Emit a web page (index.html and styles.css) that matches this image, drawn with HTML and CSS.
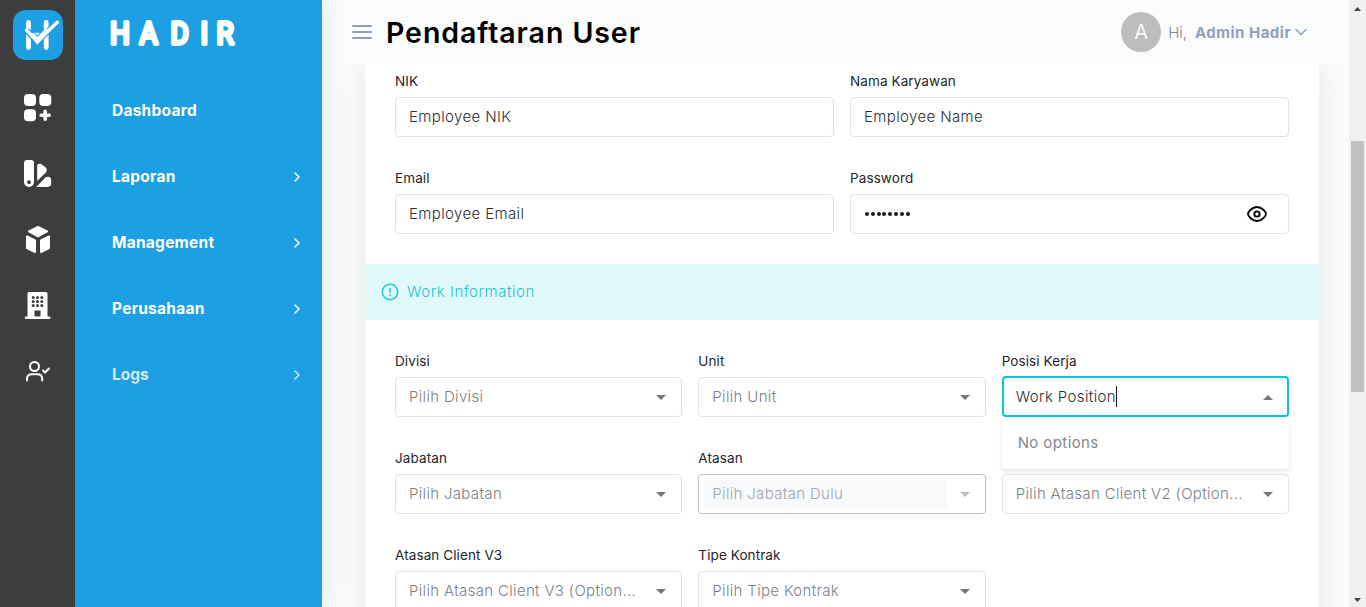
FILE: index.html
```html
<!DOCTYPE html>
<html lang="id">
<head>
<meta charset="utf-8">
<title>Pendaftaran User</title>
<link rel="stylesheet" href="styles.css">
</head>
<body>
<div class="app">
  <nav class="rail">
    <svg class="logo" viewBox="0 0 50 50" width="50" height="50">
      <rect width="50" height="50" rx="13" fill="#1ca0e3"/>
      <path d="M15.5 12.4v25.2M33.2 12.4v25.2" stroke="#fff" stroke-width="4.8" stroke-linecap="round"/>
      <path d="M13.5 20.3L24.3 31.3L44.3 12.3" fill="none" stroke="#1ca0e3" stroke-width="6"/>
      <path d="M13.5 20.3L24.3 31.3L44.3 12.3" fill="none" stroke="#fff" stroke-width="3.4" stroke-linecap="round"/>
      <path d="M16 24L24.3 34.8L41 17" fill="#fff"/>
      <path d="M18 19.5L24.3 27L31.5 19.5Z" fill="#1ca0e3"/>
      <path d="M21.8 22.7h5l-2.5 2.7z" fill="#fff"/>
    </svg>
    <svg class="rail-icon" viewBox=".5 .5 28 28" width="28" height="28" fill="#fff">
      <rect x=".5" y=".5" width="12" height="12" rx="4"/><rect x="15.8" y=".5" width="12" height="12" rx="4"/><rect x=".5" y="15.8" width="12" height="12" rx="4"/>
      <path d="M21.7 17.7v8M17.700 21.700h8" stroke="#fff" stroke-width="3.6" stroke-linecap="round"/>
    </svg>
    <svg class="rail-icon" viewBox=".5 .5 28 28" width="28" height="28" fill="#fff">
      <path fill-rule="evenodd" d="M3.5.5h4q3 0 3 3v19a5 5 0 0 1-10 0v-19q0-3 3-3zM5.5 20.8a1.9 1.9 0 1 0 0 3.8 1.9 1.9 0 0 0 0-3.8z"/>
      <path d="M13.7 21.5V5.5q2.2-2 4.6-.6l3.4 2.7q2.7 2.4.8 5.2z"/>
      <path d="M12.8 27.5l9.3-9.8q5.4-1.8 5.6 3.2v3.2q-.2 3.2-3.6 3.4z"/>
    </svg>
    <svg class="rail-icon" viewBox=".5 .5 28 28" width="28" height="28" fill="#fff" stroke="#fff" stroke-linejoin="round" stroke-width="2">
      <path d="M14.5 1.5l9 4.5-9 5-9-5z"/><path d="M3.5 11l8 4v11.5l-8-4z"/><path d="M25.5 11l-8 4v11.5l8-4z"/>
    </svg>
    <svg class="rail-icon" viewBox=".5 .5 28 28" width="28" height="28" fill="#fff">
      <path fill-rule="evenodd" d="M5.5.5h17q1.5 0 1.5 1.5v23h1.7q1.3 0 1.3 1.3t-1.3 1.2H2.500q-1.3 0-1.3-1.2T2.500 25H4V2q0-1.500 1.500-1.500zM11 19v6h6v-6z"/>
      <g fill="#3d3d3d"><circle cx="9.700" cy="6" r="1.500"/><circle cx="14" cy="6" r="1.500"/><circle cx="18.300" cy="6" r="1.500"/><circle cx="9.700" cy="10" r="1.500"/><circle cx="14" cy="10" r="1.500"/><circle cx="18.300" cy="10" r="1.500"/><circle cx="9.700" cy="14" r="1.500"/><circle cx="14" cy="14" r="1.500"/><circle cx="18.300" cy="14" r="1.500"/></g>
    </svg>
    <svg class="rail-icon" viewBox=".5 .5 28 28" width="28" height="28" fill="none" stroke="#fff" stroke-width="2" stroke-linecap="round" stroke-linejoin="round">
      <circle cx="11" cy="9" r="4.500"/><path d="M3.500 23v-1.500q0-4.700 4.700-4.700h5.800q4.700 0 4.700 4.700v1.500"/><path d="M19.500 13l2 2 4-4"/>
    </svg>
  </nav>
  <aside class="sidebar">
    <svg class="brand" width="150" height="32" viewBox="0 0 150 32">
      <text y="27" x="0 32.7 67.2 100.6 118.3" transform="scale(.9 1)">HADIR</text>
    </svg>
    <div class="menu">
      <a class="menu-item">Dashboard</a>
      <a class="menu-item">Laporan<svg class="chev" viewBox="0 0 8 10"><path d="M2 1l4 4-4 4"/></svg></a>
      <a class="menu-item">Management<svg class="chev" viewBox="0 0 8 10"><path d="M2 1l4 4-4 4"/></svg></a>
      <a class="menu-item">Perusahaan<svg class="chev" viewBox="0 0 8 10"><path d="M2 1l4 4-4 4"/></svg></a>
      <a class="menu-item dim">Logs<svg class="chev" viewBox="0 0 8 10"><path d="M2 1l4 4-4 4"/></svg></a>
    </div>
  </aside>
  <main class="main">
    <header class="topbar">
      <svg class="burger" viewBox="0 0 20 14"><path d="M1 1h18M1 7h18M1 13h18"/></svg>
      <h1 class="title">Pendaftaran User</h1>
      <div class="user">
        <span class="avatar">A</span>
        <span class="hi">Hi,</span>
        <span class="name">Admin Hadir</span>
        <svg class="down" viewBox="0 0 12 8"><path d="M1 1.500l5 5 5-5"/></svg>
      </div>
    </header>
    <section class="card">
      <div class="grid two">
        <div class="field"><label class="label">NIK</label><div class="box"><span class="value">Employee NIK</span></div></div>
        <div class="field"><label class="label">Nama Karyawan</label><div class="box"><span class="value">Employee Name</span></div></div>
        <div class="field"><label class="label">Email</label><div class="box"><span class="value">Employee Email</span></div></div>
        <div class="field"><label class="label">Password</label><div class="box">
          <span class="dots"><i></i><i></i><i></i><i></i><i></i><i></i><i></i><i></i></span>
          <svg class="eye" viewBox="0 0 20 16"><path d="M1 8C1 6 5 1 10 1s9 5 9 7-4 7-9 7S1 10 1 8z"/><circle cx="10" cy="8" r="2.700"/></svg>
        </div></div>
      </div>
      <div class="banner">
        <svg class="info" viewBox="0 0 18 18"><circle cx="9" cy="9" r="7.700"/><path d="M9 5v4.700M9 11.300v1.700"/></svg>
        <span class="banner-text">Work Information</span>
      </div>
      <div class="grid three">
        <div class="field"><label class="label">Divisi</label><div class="box"><span class="hint">Pilih Divisi</span><svg class="tri" viewBox="0 0 10 5"><path d="M0 0h10L5 5z"/></svg></div></div>
        <div class="field"><label class="label">Unit</label><div class="box"><span class="hint">Pilih Unit</span><svg class="tri" viewBox="0 0 10 5"><path d="M0 0h10L5 5z"/></svg></div></div>
        <div class="field"><label class="label">Posisi Kerja</label><div class="box focused"><span class="value">Work Position</span><span class="caret"></span><svg class="tri" viewBox="0 0 10 5"><path d="M0 5h10L5 0z"/></svg>
          <div class="popup">No options</div></div></div>
        <div class="field"><label class="label">Jabatan</label><div class="box"><span class="hint">Pilih Jabatan</span><svg class="tri" viewBox="0 0 10 5"><path d="M0 0h10L5 5z"/></svg></div></div>
        <div class="field"><label class="label">Atasan</label><div class="box disabled"><span class="hint">Pilih Jabatan Dulu</span><svg class="tri" viewBox="0 0 10 5"><path d="M0 0h10L5 5z"/></svg></div></div>
        <div class="field"><label class="label"></label><div class="box"><span class="hint">Pilih Atasan Client V2 (Option...</span><svg class="tri" viewBox="0 0 10 5"><path d="M0 0h10L5 5z"/></svg></div></div>
        <div class="field"><label class="label">Atasan Client V3</label><div class="box"><span class="hint">Pilih Atasan Client V3 (Option...</span><svg class="tri" viewBox="0 0 10 5"><path d="M0 0h10L5 5z"/></svg></div></div>
        <div class="field"><label class="label">Tipe Kontrak</label><div class="box"><span class="hint">Pilih Tipe Kontrak</span><svg class="tri" viewBox="0 0 10 5"><path d="M0 0h10L5 5z"/></svg></div></div>
      </div>
    </section>
  </main>
  <div class="scrollbar">
    <svg class="arrow" viewBox="0 0 7 4"><path d="M0 4h7L3.500 0z"/></svg>
    <div class="thumb"></div>
    <svg class="arrow bottom" viewBox="0 0 7 4"><path d="M0 0h7L3.500 4z"/></svg>
  </div>
</div>
</body>
</html>
```
FILE: styles.css
```css
* { box-sizing: border-box; }
body { margin: 0; font-family: Inter, "Open Sans", sans-serif; font-size: 15px; overflow: hidden; }
.app { display: flex; width: 1366px; height: 607px; overflow: hidden; background: #fafcfb; }

.rail { width: 75px; flex: none; background: #3d3d3d; display: flex; flex-direction: column; align-items: center; padding-top: 10px; }
.logo { flex: none; margin-bottom: 34px; }
.rail-icon { flex: none; margin: 0 0 38px 1px; }

.sidebar { width: 247px; flex: none; background: #1ca0e3; z-index: 2; box-shadow: 0 0 28px rgba(82, 95, 90, .13); clip-path: inset(0 -40px 0 0); display: flex; flex-direction: column; padding-top: 17px; }
.brand { margin-left: 35px; flex: none; }
.brand text { font: 400 31px Roboto, sans-serif; fill: #fff; stroke: #fff; stroke-width: 3.800; stroke-linejoin: round; }
.menu { display: flex; flex-direction: column; padding: 28px 21px 0 37px; }
.menu-item { height: 66px; display: flex; align-items: center; justify-content: space-between; color: #fff; font-weight: 700; font-size: 15.500px; letter-spacing: .25px; }
.menu-item.dim { color: #dbe6ec; letter-spacing: 0; }
.chev { width: 8px; height: 10px; margin-top: 2px; fill: none; stroke: currentColor; stroke-width: 1.500; stroke-linecap: round; stroke-linejoin: round; }

.main { flex: 1; min-width: 0; display: flex; flex-direction: column; }
.topbar { height: 64px; flex: none; display: flex; align-items: center; padding: 0 42px 0 30px; background: #fafcfb; z-index: 1; }
.burger { width: 20px; height: 14px; fill: none; stroke: #959eb8; stroke-width: 2; stroke-linecap: round; }
.title { margin: 2px 0 0 14px; font-size: 28.500px; font-weight: 600; letter-spacing: .93px; line-height: 36px; color: #000; white-space: nowrap; }
.user { margin-left: auto; display: flex; align-items: center; }
.avatar { width: 40px; height: 40px; border-radius: 50%; background: #bdbdbd; color: #fafcfb; display: flex; align-items: center; justify-content: center; font-size: 20px; }
.hi { margin-left: 7px; color: #7d8496; font-weight: 300; }
.name { margin-left: 8px; color: #959eb8; font-weight: 700; letter-spacing: .5px; }
.down { width: 12px; height: 8px; margin-left: 4px; fill: none; stroke: #959eb8; stroke-width: 1.500; stroke-linecap: round; stroke-linejoin: round; }

.card { flex: none; width: 954px; margin-left: 43px; background: #fff; box-shadow: 0 0 28px rgba(82, 90, 105, .12); }
.grid { display: grid; gap: 30px 16px; padding: 6px 30px 30px; }
.two { grid-template-columns: 1fr 1fr; }
.three { grid-template-columns: repeat(3, minmax(0, 1fr)); padding-top: 30px; }
.field { display: flex; flex-direction: column; gap: 6px; min-width: 0; }
.label { font-size: 13.500px; line-height: 23px; height: 21px; letter-spacing: .1px; color: #22252c; white-space: nowrap; }
.box { position: relative; height: 40px; border: 1px solid #dee2ea; border-radius: 4px; background: #fff; display: flex; align-items: center; padding: 0 20px 2px 13px; white-space: nowrap; }
.value { color: #2b2e36; font-weight: 300; letter-spacing: .38px; }
.hint { color: #7b8087; font-weight: 300; letter-spacing: .33px; }
.focused { border: 2px solid #00c8d7; height: 41px; margin: -1px 0 0; padding: 0 14px 1px 12px; }
.caret { width: 1px; height: 21px; background: #111; }
.disabled { border-color: #bdbdbd; padding: 0 20px 0 5px; }
.disabled .hint { width: 243px; height: 28px; line-height: 28px; padding-left: 8px; background: #f7f9fb; color: #a2a5aa; }
.tri { width: 10px; height: 5px; margin-left: auto; margin-top: 2px; flex: none; fill: #757575; }
.disabled .tri { fill: #bdbdbd; margin-top: 0; }
.box:not(.focused) > .tri { margin-right: -5px; }
.popup { position: absolute; left: -2px; top: 40px; width: 287px; height: 51px; padding: 0 16px; line-height: 50px; letter-spacing: .4px; color: #858993; font-weight: 400; background: #fff; border-radius: 4px; box-shadow: 0 2px 4px rgba(60, 60, 70, .14); z-index: 3; }
.dots { display: flex; gap: 1.800px; margin-left: 1px; margin-top: 1px; }
.dots i { width: 4px; height: 4px; border-radius: 50%; background: #191b22; }
.eye { width: 20px; height: 16px; margin-left: auto; margin-top: 1px; margin-right: 1px; fill: none; stroke: #000; stroke-width: 1.800; }
.banner { height: 56px; background: #e2f9fb; display: flex; align-items: center; padding-left: 16px; color: #19c5d6; }
.info { width: 18px; height: 18px; fill: none; stroke: #10cedb; stroke-width: 1.500; }
.banner-text { margin-left: 8px; padding-bottom: 2px; font-weight: 300; letter-spacing: .53px; }

.scrollbar { width: 17px; flex: none; background: #f0f0f0; display: flex; flex-direction: column; align-items: center; padding: 7px 0 5px; z-index: 2; }
.arrow { width: 7px; height: 4px; flex: none; fill: #444; }
.thumb { width: 13px; height: 251px; margin-top: 130px; background: #c1c1c1; }
.bottom { margin-top: auto; }
```
